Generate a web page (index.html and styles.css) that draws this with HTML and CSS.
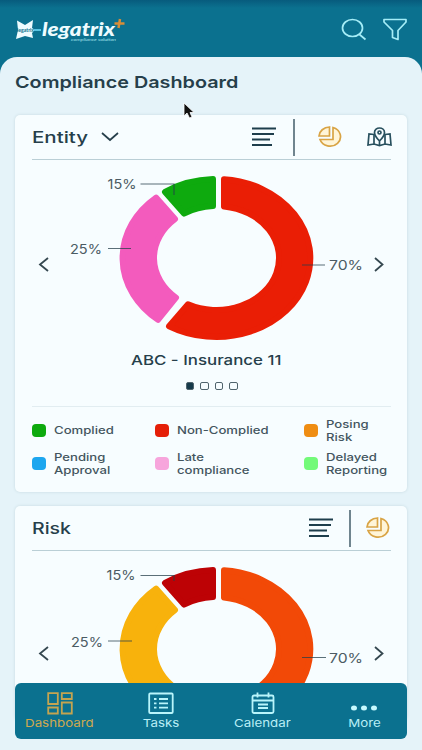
FILE: index.html
```html
<!DOCTYPE html>
<html lang="en">
<head>
    <meta charset="utf-8">
    <title>Compliance Dashboard</title>
    <link rel="stylesheet" href="styles.css">
</head>
<body>
    <div class="app">
        <header class="topbar">
            <svg class="logo" width="112" height="32" viewBox="0 0 112 32">
                <path d="M2 2.500 L10 7 L18 2 L17 10 L20 12 L17 15 L18 20 L10 18 L1 21 L3 12 Z" fill="#eefcff"/>
                <text x="2" y="14" class="logo-mini" textLength="17" lengthAdjust="spacingAndGlyphs">legatrix</text>
                <path d="M19 12 H26" stroke="#58c4e2" stroke-width="2"/>
                <text x="27" y="17.500" class="logo-text" textLength="73" lengthAdjust="spacingAndGlyphs">legatrix</text>
                <text x="56" y="22.500" class="logo-sub" textLength="45" lengthAdjust="spacingAndGlyphs">compliance solution</text>
                <path d="M105 1 L103.500 10 M99.500 5.500 H109.500" stroke="#d68d38" stroke-width="2.500"/>
            </svg>
            <div class="topbar-icons">
                <svg width="26" height="24" viewBox="0 0 26 24" fill="none" stroke="#a5edf7" stroke-width="1.700">
                    <ellipse cx="11.500" cy="10" rx="10" ry="8.500"/>
                    <path d="M18.500 16.500 L24.500 21.500"/>
                </svg>
                <svg width="24" height="24" viewBox="0 0 24 24" fill="none" stroke="#a5edf7" stroke-width="1.700" stroke-linejoin="round">
                    <path d="M1 1.500 H23 V4 L15 12.500 V21.500 L9.500 19.500 V12.500 L1 4 Z"/>
                </svg>
            </div>
        </header>

        <main class="content">
            <h1>Compliance Dashboard</h1>

            <!-- Entity -->
            <section class="card">
                <div class="card-head">
                    <h2 class="entity-title">Entity</h2>
                    <svg class="chevron" width="18" height="10" viewBox="0 0 18 10"><path d="M1 1 L9 8 L17 1"/></svg>
                    <div class="views">
                        <svg class="list-icon" width="26" height="20" viewBox="0 0 26 20"><path d="M1 1.500 H25 M1 7 H23 M1 12.500 H19 M1 18 H21"/></svg>
                        <span class="bar"></span>
                        <svg class="pie-icon" width="26" height="22" viewBox="0 0 26 22"><path d="M15 1.500 A10.500 9.500 0 1 1 2 13.500 H15 Z"/><path d="M11.500 1 V10 H1 A11 9.500 0 0 1 11.500 1 Z"/></svg>
                        <svg class="map-icon" width="25" height="20" viewBox="0 0 25 20"><path d="M7 7.500 L2 7 L1 18 L7 17 L12.500 18.500 L18 17 L24 18 L23 7 L18 7.500 M7 7.500 V17 M18 7.500 V17"/><path d="M12.500 14 C9 10.500 7.500 8 7.500 5.500 C7.500 -0.500 17.500 -0.500 17.500 5.500 C17.500 8 16 10.500 12.500 14 Z M12.500 14 V18"/><circle cx="12.500" cy="5.500" r="1.500"/></svg>
                    </div>
                </div>
                <svg class="chart" width="360" height="188" viewBox="0 0 360 188">
                    <g class="segments">
                        <path class="red" d="M192 19.200 A94 79 0 1 1 137 166.200 L156 144.300 A62.500 52 0 1 0 192 46.400 Z"/>
                        <path class="pink" d="M126 159.800 A94 79 0 0 1 124 37.600 L143 59.100 A62.500 52 0 0 0 144 137.600 Z"/>
                        <path class="green" d="M133 31.900 A94 79 0 0 1 181 19.100 V46.100 A62.500 52 0 0 0 152 53.600 Z"/>
                    </g>
                    <path class="leader" d="M108.500 24 H142 V35 M76 88.500 H99 M270 105 H293"/>
                    <g class="labels">
                        <text x="75.500" y="28.500" textLength="29" lengthAdjust="spacingAndGlyphs">15%</text>
                        <text x="38" y="93.500" textLength="32" lengthAdjust="spacingAndGlyphs">25%</text>
                        <text x="297" y="109.500" textLength="34" lengthAdjust="spacingAndGlyphs">70%</text>
                    </g>
                    <path class="arrow" d="M16 98 L8 104.500 L16 111 M343 98 L350.500 104.500 L343 111"/>
                </svg>
                <p class="chart-name"><span>ABC - Insurance 11</span></p>
                <div class="dots"><i class="on"></i><i></i><i></i><i></i></div>
                <ul class="legend">
                    <li><i class="sw green"></i><span>Complied</span></li>
                    <li><i class="sw red"></i><span>Non-Complied</span></li>
                    <li><i class="sw orange"></i><span>Posing<br>Risk</span></li>
                    <li><i class="sw blue"></i><span>Pending<br>Approval</span></li>
                    <li><i class="sw rose"></i><span>Late<br>compliance</span></li>
                    <li><i class="sw lime"></i><span>Delayed<br>Reporting</span></li>
                </ul>
            </section>

            <!-- Risk -->
            <section class="card card-risk">
                <div class="card-head">
                    <h2 class="risk-title">Risk</h2>
                    <div class="views">
                        <svg class="list-icon" width="26" height="20" viewBox="0 0 26 20"><path d="M1 1.500 H25 M1 7 H23 M1 12.500 H19 M1 18 H21"/></svg>
                        <span class="bar"></span>
                        <svg class="pie-icon last" width="26" height="22" viewBox="0 0 26 22"><path d="M15 1.500 A10.500 9.500 0 1 1 2 13.500 H15 Z"/><path d="M11.500 1 V10 H1 A11 9.500 0 0 1 11.500 1 Z"/></svg>
                    </div>
                </div>
                <svg class="chart" width="360" height="188" viewBox="0 0 360 188">
                    <g class="segments">
                        <path class="flame" d="M192 19.200 A94 79 0 1 1 137 166.200 L156 144.300 A62.500 52 0 1 0 192 46.400 Z"/>
                        <path class="amber" d="M126 159.800 A94 79 0 0 1 124 37.600 L143 59.100 A62.500 52 0 0 0 144 137.600 Z"/>
                        <path class="crimson" d="M133 31.900 A94 79 0 0 1 181 19.100 V46.100 A62.500 52 0 0 0 152 53.600 Z"/>
                    </g>
                    <path class="leader" d="M108.500 24.500 H142 V30 M76 90 H100 M270 106.500 H294"/>
                    <g class="labels">
                        <text x="74.500" y="28.500" textLength="29" lengthAdjust="spacingAndGlyphs">15%</text>
                        <text x="39" y="95.500" textLength="32" lengthAdjust="spacingAndGlyphs">25%</text>
                        <text x="297" y="111.500" textLength="34" lengthAdjust="spacingAndGlyphs">70%</text>
                    </g>
                    <path class="arrow" d="M16 96 L8 102.500 L16 109 M343 96 L350.500 102.500 L343 109"/>
                </svg>
            </section>
        </main>

        <nav class="tabbar">
            <a class="tab active">
                <svg width="26" height="23" viewBox="0 0 26 23"><path d="M1.200 1.200 H10.800 V12 H1.200 Z M14.800 1.200 H24.800 V7 H14.800 Z M1.200 15.500 H10.800 V21.500 H1.200 Z M14.800 10.500 H24.800 V21.500 H14.800 Z"/></svg>
                <span>Dashboard</span>
            </a>
            <a class="tab">
                <svg width="26" height="23" viewBox="0 0 26 23"><rect x="1.200" y="1.500" width="23.500" height="19.500" rx="1"/><path d="M6 7 H8.500 M11 7 H20 M6 11.300 H8.500 M11 11.300 H20 M6 15.600 H8.500 M11 15.600 H20"/></svg>
                <span>Tasks</span>
            </a>
            <a class="tab">
                <svg width="26" height="23" viewBox="0 0 26 23"><rect x="2.500" y="3.500" width="21" height="17.500" rx="1.500"/><path d="M2.500 8.500 H23.500 M7.500 0.500 V5.500 M18.500 0.500 V5.500 M8 12.500 H18 M8 16 H18"/></svg>
                <span>Calendar</span>
            </a>
            <a class="tab">
                <svg width="28" height="23" viewBox="0 0 28 23"><g class="more"><ellipse cx="4" cy="16" rx="3" ry="2.500"/><ellipse cx="14" cy="16" rx="3" ry="2.500"/><ellipse cx="24" cy="16" rx="3" ry="2.500"/></g></svg>
                <span>More</span>
            </a>
        </nav>

        <svg class="cursor" width="12" height="18" viewBox="0 0 12 18"><path d="M1 1 V14 L4 11 L6.500 16 L9 15 L7 10.500 H11 Z" fill="#111" stroke="#fff" stroke-width="0.800"/></svg>
    </div>
</body>
</html>
```

FILE: styles.css
```css
* {
    box-sizing: border-box;
}
body {
    margin: 0;
    background: #0b718f;
    color: #263f4b;
    font-family: Inter, "Open Sans", sans-serif;
}
h1, h2, p, ul {
    margin: 0;
    padding: 0;
    font-weight: 500;
}
svg {
    display: block;
    flex-shrink: 0;
}
.app {
    position: relative;
    width: 422px;
    height: 750px;
    overflow: hidden;
    background: linear-gradient(#075b7d, #0b718f 8px);
}

/* top bar */
.topbar {
    display: flex;
    justify-content: space-between;
    height: 57px;
    padding: 18px 15px 0;
}
.logo-text {
    font: italic 900 19px Lato, sans-serif;
    fill: #eefcff;
}
.logo-mini {
    font: bold 5px Lato, sans-serif;
    fill: #0b718f;
}
.logo-sub {
    font: italic 4px Lato, sans-serif;
    fill: #a5e3ee;
}
.topbar-icons {
    display: flex;
    gap: 16px;
}

/* page */
.content {
    height: 693px;
    padding: 15px 15px 0;
    border-radius: 17px 17px 0 0;
    background: #e5f3f9;
}
h1 {
    width: max-content;
    height: 43px;
    font-size: 16.5px;
    font-weight: 600;
    line-height: 20px;
    transform: scaleX(1.2);
    transform-origin: left;
}
.card {
    height: 377px;
    margin-bottom: 14px;
    padding: 0 16px 0 17px;
    border-radius: 5px;
    background: #f7fdff;
    box-shadow: 0 0 3px #c4d8df;
}
.card-risk {
    height: 215px;
    overflow: hidden;
}
.card-head {
    display: flex;
    align-items: center;
    height: 45px;
    border-bottom: 1px solid #bacfd6;
}
h2 {
    font-size: 16px;
    transform: scaleX(1.22);
    transform-origin: left;
}
.entity-title {
    transform: scaleX(1.28);
}
.chevron {
    margin-left: 25px;
    fill: none;
    stroke: #263f4b;
    stroke-width: 1.7;
}
.views {
    display: flex;
    align-items: center;
    margin-left: auto;
    margin-right: -1px;
}
.list-icon {
    stroke: #1e3e4c;
    stroke-width: 2;
}
.bar {
    width: 2px;
    height: 37px;
    margin: 0 23px 0 16px;
    background: #70858f;
}
.card-risk .bar {
    margin: 0 15px;
}
.pie-icon {
    fill: #fff5d8;
    stroke: #d9a445;
    stroke-width: 1.7;
    margin-right: 23px;
}
.pie-icon.last {
    margin-right: 0;
}
.map-icon {
    fill: none;
    stroke: #28505e;
    stroke-width: 1.7;
}

/* donut */
.segments path {
    stroke-width: 6;
    stroke-linejoin: round;
}
.segments .red { fill: #ea1e05; stroke: #ea1e05; }
.segments .pink { fill: #f35bbd; stroke: #f35bbd; }
.segments .green { fill: #0eaa0e; stroke: #0eaa0e; }
.segments .flame { fill: #f24907; stroke: #f24907; }
.segments .amber { fill: #f8b20c; stroke: #f8b20c; }
.segments .crimson { fill: #bd0205; stroke: #bd0205; }
.leader {
    fill: none;
    stroke: #263f4b;
    stroke-opacity: 0.75;
    stroke-width: 1.2;
}
.labels {
    font-size: 13px;
    fill: #4b5b63;
}
.arrow {
    fill: none;
    stroke: #354850;
    stroke-width: 1.8;
}
.chart-name {
    height: 24px;
    padding-right: 11px;
    font-size: 13.5px;
    line-height: 24px;
    text-align: center;
}
.chart-name span {
    display: inline-block;
    transform: scaleX(1.25);
}
.dots {
    display: flex;
    justify-content: center;
    gap: 6px;
    margin-top: 10px;
}
.dots i {
    width: 8.5px;
    height: 8px;
    border: 1px solid #50646d;
    border-radius: 2px;
}
.dots .on {
    background: #163a4a;
}

/* legend */
.legend {
    display: grid;
    grid-template-columns: 123px 149px 1fr;
    grid-auto-rows: 33px;
    margin-top: 16px;
    padding-top: 7px;
    border-top: 1px solid #e2edf1;
    list-style: none;
    font-size: 10.5px;
    line-height: 13px;
    color: #43555e;
}
.legend li {
    display: flex;
    align-items: center;
    gap: 8px;
}
.legend span {
    transform: scaleX(1.25);
    transform-origin: left;
    white-space: nowrap;
}
.sw {
    width: 14px;
    height: 13px;
    border-radius: 4px;
}
.sw.green { background: #0eaa0e; }
.sw.red { background: #e51f08; }
.sw.orange { background: #ef8d13; }
.sw.blue { background: #1ca6ef; }
.sw.rose { background: #f7a5dc; }
.sw.lime { background: #73fa79; }

/* bottom tabs */
.tabbar {
    position: absolute;
    left: 15px;
    top: 683px;
    display: flex;
    width: 392px;
    height: 56px;
    padding: 9px 0 0;
    border-radius: 6px;
    background: #0b718f;
}
.tab {
    display: flex;
    flex-direction: column;
    flex-shrink: 0;
    align-items: center;
    width: 101.5px;
    color: #b9eef6;
    font-size: 11px;
    line-height: 17px;
}
.tab:first-child {
    margin-left: -6px;
}
.tab svg {
    fill: none;
    stroke: #b9f5fb;
    stroke-width: 1.8;
}
.tab .more {
    fill: #c7faff;
    stroke: none;
}
.tab.active {
    color: #cda94f;
}
.tab.active svg {
    stroke: #c4a450;
}
.tab span {
    transform: scaleX(1.21);
}

.cursor {
    position: absolute;
    left: 183px;
    top: 102px;
}
```
